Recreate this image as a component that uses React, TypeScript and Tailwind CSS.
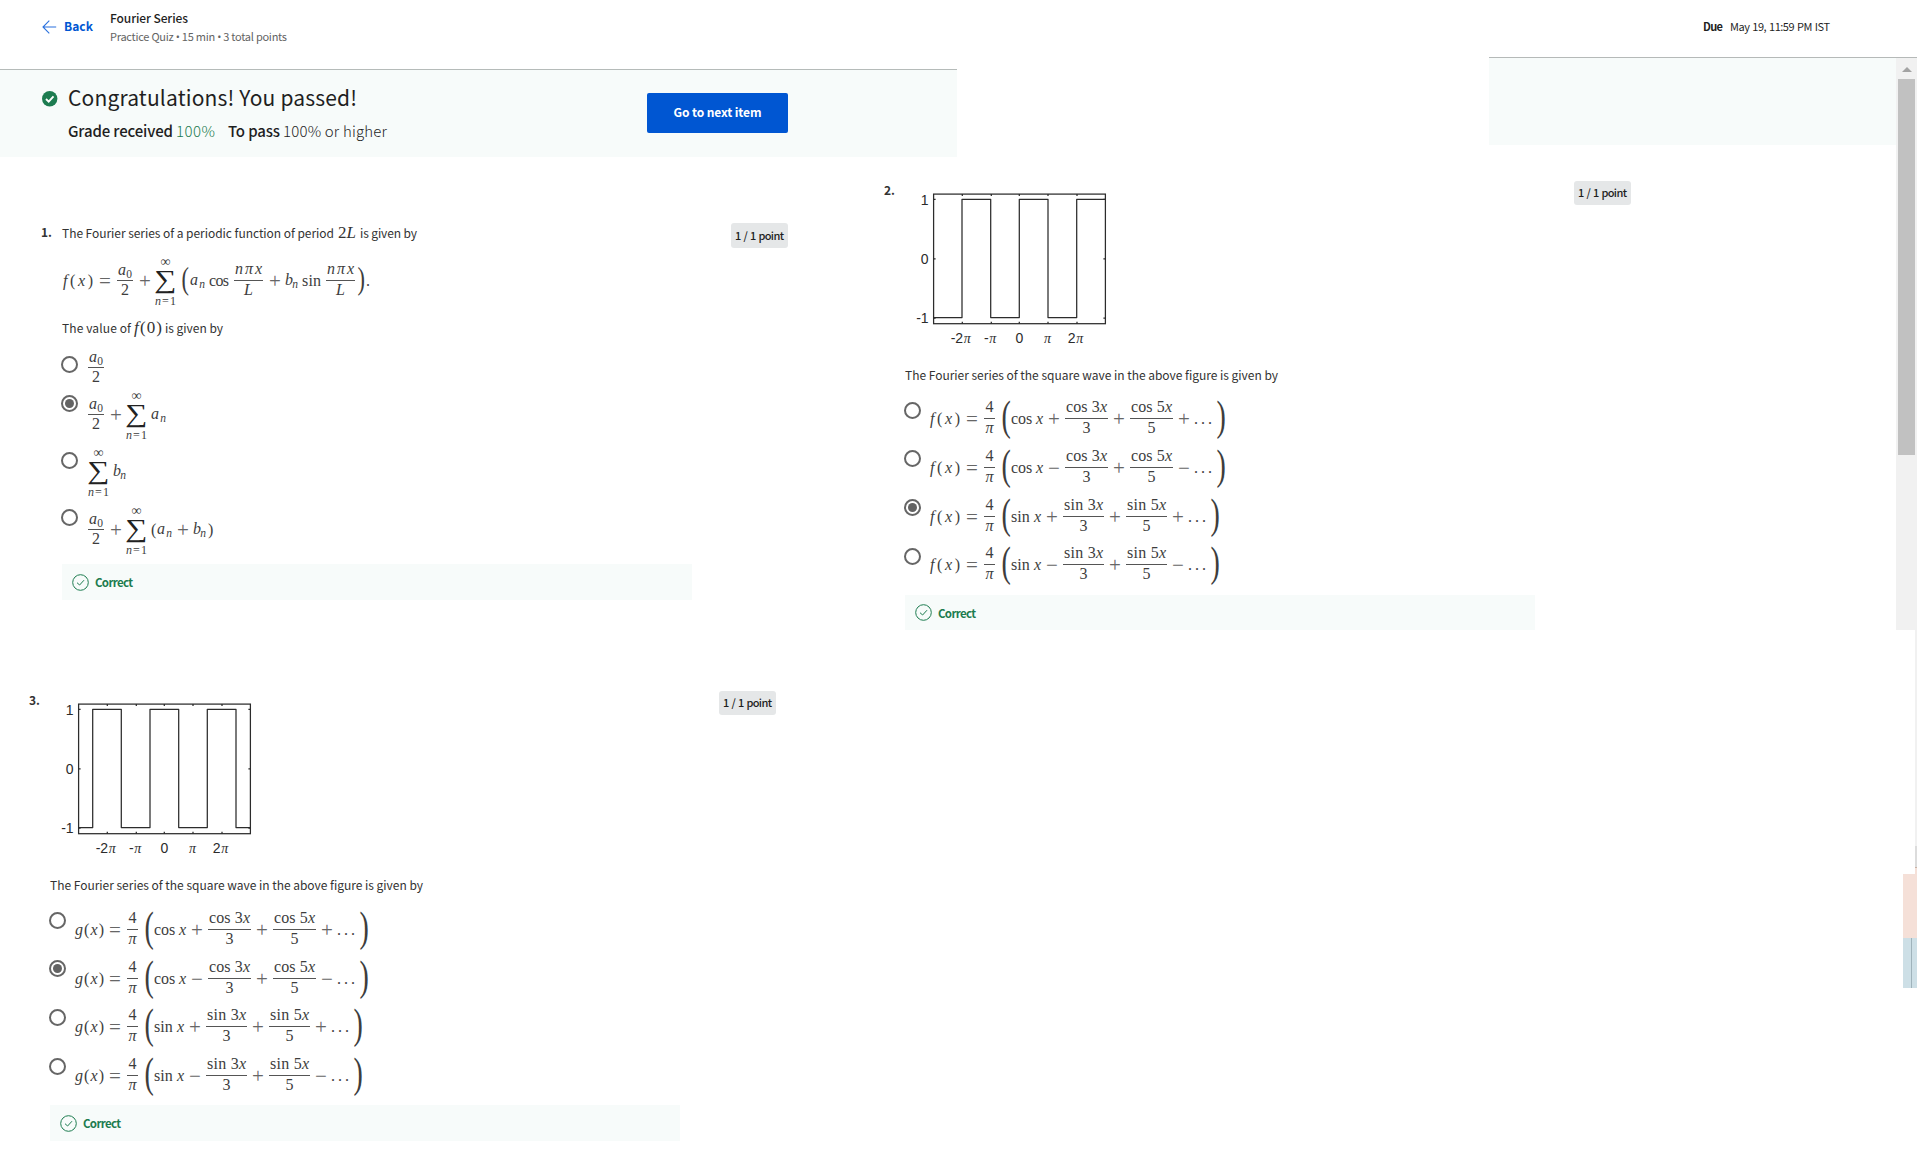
import { useLayoutEffect, useRef, useState } from "react";
import type { ReactNode } from "react";

/** Text whose tracking is computed so that it spans the width given by its classes. */
function Fit({ className = "", children }: { className?: string; children: ReactNode }) {
  const outer = useRef<HTMLSpanElement>(null);
  const inner = useRef<HTMLSpanElement>(null);
  const [spacing, setSpacing] = useState(0);
  useLayoutEffect(() => {
    if (!outer.current || !inner.current) return;
    const count = (inner.current.textContent ?? "").length - 1;
    if (count < 1) return;
    const room = outer.current.clientWidth - inner.current.getBoundingClientRect().width;
    setSpacing(room / count);
  }, []);
  return (
    <span ref={outer} className={`flex shrink-0 items-start whitespace-nowrap ${className}`}>
      <span ref={inner} className="block shrink-0" style={{ letterSpacing: `${spacing}px` }}>
        {children}
      </span>
    </span>
  );
}

const Sub = ({ children }: { children: ReactNode }) => (
  <span className="relative top-[3px] text-[11.5px]">{children}</span>
);
const I = ({ children }: { children: ReactNode }) => <i>{children}</i>;

function Formula({ className = "", children }: { className?: string; children: ReactNode }) {
  return (
    <div
      className={`flex shrink-0 items-center font-['Liberation_Serif',serif] text-[16px] leading-[16px] text-[#3d3d3d] ${className}`}
    >
      {children}
    </div>
  );
}

function Frac({ className, num, den }: { className: string; num: ReactNode; den: ReactNode }) {
  return (
    <span className={`flex shrink-0 flex-col items-stretch ${className}`}>
      <span className="flex h-5 justify-center pt-px">{num}</span>
      <span className="h-px bg-[#555]" />
      <span className="flex h-5 justify-center pt-px">{den}</span>
    </span>
  );
}

function Sum({ className }: { className: string }) {
  return (
    <span className={`flex w-[21px] shrink-0 flex-col items-center ${className}`}>
      <span className="flex h-3.5 items-center pt-[3px] text-[14px] leading-[14px]">∞</span>
      <span className="flex h-[26px] items-center justify-center text-[26px] leading-[26px] text-[#222]">
        <span className="scale-x-120">∑</span>
      </span>
      <Fit className="h-[15px] w-[21px] text-[12px] leading-[17px]">
        <I>n</I>=1
      </Fit>
    </span>
  );
}

const Big = ({ className, children }: { className: string; children: ReactNode }) => (
  <span
    className={`flex w-2 shrink-0 items-center justify-center text-[43px] leading-[42px] ${className}`}
  >
    <span className="-translate-y-[3px] scale-x-65">{children}</span>
  </span>
);
const Mid = ({ className, children }: { className: string; children: ReactNode }) => (
  <span
    className={`flex w-[7px] shrink-0 items-center justify-center text-[32px] leading-[31px] ${className}`}
  >
    <span className="-translate-y-[2px] scale-x-70">{children}</span>
  </span>
);
const Op = ({ className, children }: { className: string; children: ReactNode }) => (
  <span className={`flex w-[12px] shrink-0 justify-center text-[21px] text-[#666] ${className}`}>
    {children}
  </span>
);

function Series({ fn, trig, sign }: { fn: string; trig: "cos" | "sin"; sign: string }) {
  const cos = trig === "cos";
  return (
    <Formula className="h-[49px]">
      <Fit className={fn === "f" ? "w-[30px]" : "w-[29px]"}>
        <I>{fn}</I>(<I>x</I>)
      </Fit>
      <Op className={fn === "f" ? "ml-[6px]" : "ml-[5px]"}>=</Op>
      <Frac className="ml-[6px] w-[11px]" num="4" den={<I>π</I>} />
      <Big className="ml-[7px]">(</Big>
      <Fit className={cos ? "ml-[1px] w-[32px]" : "ml-[1px] w-[30px]"}>
        {trig} <I>x</I>
      </Fit>
      <Op className="ml-[5px]">{sign}</Op>
      <Frac
        className={cos ? "ml-[5px] w-[43px]" : "ml-[5px] w-[41px]"}
        num={
          <Fit className={cos ? "w-[41px]" : "w-[39px]"}>
            {trig} 3<I>x</I>
          </Fit>
        }
        den="3"
      />
      <Op className="ml-[5px]">+</Op>
      <Frac
        className={cos ? "ml-[5px] w-[43px]" : "ml-[5px] w-[41px]"}
        num={
          <Fit className={cos ? "w-[41px]" : "w-[39px]"}>
            {trig} 5<I>x</I>
          </Fit>
        }
        den="5"
      />
      <Op className="ml-[5px]">{sign}</Op>
      <Fit className="ml-[4px] w-[18px]">...</Fit>
      <Big className="ml-[5px]">)</Big>
    </Formula>
  );
}

function Radio({ checked, className }: { checked?: boolean; className: string }) {
  return (
    <span
      className={`flex size-[17px] shrink-0 items-center justify-center rounded-full border-2 border-[#666] ${className}`}
    >
      {checked && <span className="size-[9px] rounded-full bg-[#636363]" />}
    </span>
  );
}

function Badge({ className }: { className: string }) {
  return (
    <div className={`flex w-[57px] shrink-0 rounded-[3px] bg-[#e5e7e8] pl-[4px] ${className}`}>
      <Fit className="w-[49px] text-[11px] font-medium text-[#1f1f1f] [word-spacing:1px]">1 / 1 point</Fit>
    </div>
  );
}

function Correct({ className }: { className: string }) {
  return (
    <div className={`flex w-[630px] items-center bg-[#f7fbfa] pl-[10px] ${className}`}>
      <svg viewBox="0 0 17 17" className="size-[17px]" fill="none" stroke="#1d7c50">
        <circle cx="8.5" cy="8.5" r="7.8" />
        <path d="M5 8.7 7.6 11 12 6.2" />
      </svg>
      <Fit className="ml-[6px] w-[38px] text-[11.5px] leading-4 font-bold text-[#1d7c50]">Correct</Fit>
    </div>
  );
}

function Plot({ wave, className }: { wave: string; className: string }) {
  const ticks = [51.3, 80.3, 108.3, 137, 166];
  const pi = (
    <tspan className="font-['Liberation_Serif',serif] text-[14px] italic" dx="0.6">
      π
    </tspan>
  );
  return (
    <svg viewBox="0 0 196 170" className={`h-[170px] w-[196px] shrink-0 ${className}`}>
      <g fill="none" stroke="#2c2c2c" strokeWidth="1.25">
        <rect x="22.6" y="13.1" width="171.8" height="129.6" />
        <path d={wave} strokeLinejoin="round" />
        {ticks.map((x) => (
          <path key={x} d={`M${x} 13v2M${x} 142.7v-2`} />
        ))}
        <path d="M22.6 18.4h2M22.6 77.8h2M22.6 137h2M194.4 18.4h-2M194.4 77.8h-2M194.4 137h-2" />
      </g>
      <g className="fill-[#2b2b2b] font-['Liberation_Sans',sans-serif] text-[14px]">
        <text x="17.6" y="24" textAnchor="end">1</text>
        <text x="17.6" y="83.4" textAnchor="end">0</text>
        <text x="17.6" y="142.3" textAnchor="end">-1</text>
        <text x="39.7" y="162">-2{pi}</text>
        <text x="73" y="162">-{pi}</text>
        <text x="104.5" y="162">0</text>
        <text x="132.4" y="162">{pi}</text>
        <text x="156.8" y="162">2{pi}</text>
      </g>
    </svg>
  );
}

const waveF =
  "M22.6 136.5H51V18.3H79.7V136.5H108.3V18.3H137V136.5H165.7V18.3H194.4";
const waveG =
  "M22.6 136.5H36.7V18.3H65.3V136.5H94V18.3H122.7V136.5H151.3V18.3H180V136.5H194.4";

const seriesRows = [
  { trig: "cos", sign: "+" },
  { trig: "cos", sign: "−" },
  { trig: "sin", sign: "+" },
  { trig: "sin", sign: "−" },
] as const;

function Options({ fn, picked, rows, radios, gap }: {
  fn: string; picked: number; rows: string[]; radios: string[]; gap: string;
}) {
  return (
    <>
      {seriesRows.map((row, i) => (
        <div key={i} className={`flex items-start ${rows[i]}`}>
          <Radio checked={i === picked} className={radios[i]} />
          <div className={gap}>
            <Series fn={fn} trig={row.trig} sign={row.sign} />
          </div>
        </div>
      ))}
    </>
  );
}

function Ordinal({ children, className }: { children: ReactNode; className: string }) {
  return (
    <Fit className={`w-[11px] text-[12px] leading-4 font-bold text-[#333] ${className}`}>{children}</Fit>
  );
}

const prompt = "The Fourier series of the square wave in the above figure is given by";
const an = <><I>a</I><Sub><I>n</I></Sub></>;
const bn = <><I>b</I><Sub><I>n</I></Sub></>;
const a0 = <><I>a</I><Sub>0</Sub></>;
const npx = <I>nπx</I>;
const dot = <span className="font-['Open_Sans',sans-serif]">•</span>;

function A0Half({ className = "" }: { className?: string }) {
  return (
    <Frac className={`w-[16px] ${className}`} num={<Fit className="w-[14px] pt-px">{a0}</Fit>} den="2" />
  );
}

function QuestionOne() {
  return (
    <section className="w-[884px] shrink-0 pt-[66px]">
      <div className="flex h-[25px] items-start pl-[41px]">
        <Ordinal className="mt-[1px]">1.</Ordinal>
        <div className="mt-[2px] ml-[10px] flex w-[669px] text-[12px] leading-4 text-[#333]">
          <Fit className="w-[272px]">The Fourier series of a periodic function of period</Fit>
          <Fit className="ml-[4px] w-[18px] font-['Liberation_Serif',serif] text-[17px]">2<I>L</I></Fit>
          <Fit className="ml-[4px] w-[57px]">is given by</Fit>
        </div>
        <Badge className="h-[25px] leading-[24px]" />
      </div>
      <Formula className="mt-[5px] h-[55px] pl-[63px]">
        <Fit className="w-[30px]"><I>f</I>(<I>x</I>)</Fit>
        <Op className="ml-[6px]">=</Op>
        <A0Half className="ml-[6px]" />
        <Op className="ml-[6px]">+</Op>
        <Sum className="ml-[4px]" />
        <Mid className="ml-[6px]">(</Mid>
        <Fit className="ml-[1px] w-[15px]">{an}</Fit>
        <Fit className="ml-[4px] w-[20px]">cos</Fit>
        <Frac className="ml-[5px] w-[29px]" num={<Fit className="w-[27px]">{npx}</Fit>} den={<I>L</I>} />
        <Op className="ml-[6px]">+</Op>
        <Fit className="ml-[4px] w-[13px]">{bn}</Fit>
        <Fit className="ml-[4px] w-[19px]">sin</Fit>
        <Frac className="ml-[5px] w-[29px]" num={<Fit className="w-[27px]">{npx}</Fit>} den={<I>L</I>} />
        <Mid className="ml-[3px]">)</Mid>
        <span className="ml-[1px]">.</span>
      </Formula>
      <div className="mt-[12px] flex h-4 pl-[62px] text-[12px] leading-4 text-[#333]">
        <Fit className="w-[69px]">The value of</Fit>
        <Fit className="ml-[3px] w-[28px] font-['Liberation_Serif',serif] text-[17px]"><I>f</I>(0)</Fit>
        <Fit className="ml-[3px] w-[58px]">is given by</Fit>
      </div>
      <div className="mt-[11px] pl-[61px]">
        <div className="flex h-[40px] items-start">
          <Radio className="mt-[9px]" />
          <Formula className="h-[41px] pl-[10px]"><A0Half /></Formula>
        </div>
        <div className="flex h-[57px] items-start">
          <Radio checked className="mt-[8px]" />
          <Formula className="h-[55px] pl-[10px]">
            <A0Half />
            <Op className="ml-[6px]">+</Op>
            <Sum className="ml-[4px]" />
            <Fit className="ml-[4px] w-[15px]">{an}</Fit>
          </Formula>
        </div>
        <div className="flex h-[58px] items-start">
          <Radio className="mt-[8px]" />
          <Formula className="h-[55px] pl-[10px]">
            <Sum className="" />
            <Fit className="ml-[4px] w-[13px]">{bn}</Fit>
          </Formula>
        </div>
        <div className="flex h-[55px] items-start">
          <Radio className="mt-[7px]" />
          <Formula className="h-[55px] pl-[10px]">
            <A0Half />
            <Op className="ml-[6px]">+</Op>
            <Sum className="ml-[4px]" />
            <span className="ml-[4px] w-[6px]">(</span>
            <Fit className="w-[15px]">{an}</Fit>
            <Op className="ml-[5px]">+</Op>
            <Fit className="ml-[4px] w-[13px]">{bn}</Fit>
            <span className="ml-[2px]">)</span>
          </Formula>
        </div>
      </div>
      <Correct className="mt-[7px] ml-[62px] h-[36px]" />
    </section>
  );
}

export default function App() {
  return (
    <div className="flex h-[1168px] w-[1920px] overflow-hidden bg-white font-['Noto_Sans_CJK_SC',sans-serif]">
      <div className="w-[1896px] shrink-0">
        <div className="flex h-[157px]">
          <div className="w-[957px]">
            <header className="flex h-[70px] border-b border-[#b5bbb9] pl-[42px]">
              <svg viewBox="0 0 15 14" className="mt-[20px] h-[14px] w-[15px]" fill="none" stroke="#2a71de" strokeWidth="1.1">
                <path d="M14.2 7H1M7.3.6 1 7l6.3 6.4" />
              </svg>
              <Fit className="mt-[18px] ml-[7px] w-[29px] text-[12px] leading-4 font-bold text-[#0056d2]">Back</Fit>
              <div className="ml-[17px] pt-[10px]">
                <Fit className="h-4 w-[78px] text-[12px] leading-4 font-medium text-[#1f1f1f]">Fourier Series</Fit>
                <div className="mt-[2px] h-[16px]">
                  <Fit className="w-[177px] text-[11px] leading-4 text-[#636363]">
                    Practice Quiz {dot} 15 min {dot} 3 total points
                  </Fit>
                </div>
              </div>
            </header>
            <div className="flex h-[87px] bg-[#f7fbfa] pl-[42px]">
              <svg viewBox="0 0 16 16" className="mt-[21px] size-[16px]">
                <circle cx="7.7" cy="7.8" r="7.7" fill="#1d7c50" />
                <path d="M4 8 6.7 10.6 11.5 5.4" fill="none" stroke="#fff" strokeWidth="1.9" />
              </svg>
              <div className="ml-[10px] w-[579px] pt-[12px]">
                <Fit className="h-[30px] w-[289px] text-[21px] leading-[30px] text-[#1f1f1f]">
                  Congratulations! You passed!
                </Fit>
                <div className="mt-[8px] flex text-[15px] leading-[22px] text-[#1f1f1f]">
                  <Fit className="w-[105px] font-medium">Grade received</Fit>
                  <Fit className="ml-[3px] w-[39px] font-light text-[#1d7c50]">100%</Fit>
                  <Fit className="ml-[13px] w-[52px] font-medium">To pass</Fit>
                  <Fit className="ml-[3px] w-[104px] font-light">100% or higher</Fit>
                </div>
              </div>
              <button className="mt-[23px] flex h-[40px] w-[141px] items-center justify-center rounded-[2px] bg-[#0056d2] text-white">
                <Fit className="h-4 w-[88px] text-left text-[12px] leading-[14px] font-bold">Go to next item</Fit>
              </button>
            </div>
          </div>
          <div className="ml-[532px] w-[407px]">
            <header className="flex h-[58px] border-b border-[#b5b9b8] pt-[18px] pl-[214px] text-[11px] leading-4 text-[#1f1f1f]">
              <Fit className="w-[20px] text-[11px] font-bold">Due</Fit>
              <Fit className="ml-[7px] w-[100px] [word-spacing:1px]">May 19, 11:59 PM IST</Fit>
            </header>
            <div className="h-[87px] bg-[#f7fbfa]" />
          </div>
        </div>

        <div className="flex h-[534px]">
          <QuestionOne />
          <section className="w-[1012px] pt-[24px]">
            <div className="flex h-[186px] items-start">
              <Ordinal className="mt-px">2.</Ordinal>
              <Plot wave={waveF} className="ml-[16px]" />
              <Badge className="ml-[467px] h-[24px] leading-[23px]" />
            </div>
            <Fit className="ml-[21px] h-4 w-[373px] text-[12px] leading-4 text-[#333]">{prompt}</Fit>
            <div className="mt-[11px] pl-[20px]">
              <Options
                fn="f"
                picked={2}
                rows={["h-[49px]", "h-[49px]", "h-[48px]", "h-[49px]"]}
                radios={["mt-[8px]", "mt-[7px]", "mt-[7px]", "mt-[8px]"]}
                gap="ml-[9px]"
              />
            </div>
            <Correct className="mt-[6px] ml-[21px] h-[35px]" />
          </section>
        </div>

        <section className="pl-[29px]">
          <div className="flex h-[186px] items-start">
            <Ordinal className="mt-px">3.</Ordinal>
            <Plot wave={waveG} className="ml-[16px]" />
            <Badge className="ml-[467px] h-[24px] leading-[23px]" />
          </div>
          <Fit className="ml-[21px] h-4 w-[373px] text-[12px] leading-4 text-[#333]">{prompt}</Fit>
          <div className="mt-[12px] pl-[20px]">
            <Options
              fn="g"
              picked={1}
              rows={["h-[49px]", "h-[48px]", "h-[49px]", "h-[49px]"]}
              radios={["mt-[7px]", "mt-[6px]", "mt-[7px]", "mt-[7px]"]}
              gap="ml-[9px]"
            />
          </div>
          <Correct className="mt-[5px] ml-[21px] h-[36px]" />
        </section>
      </div>

      <aside className="flex w-[21px] shrink-0 flex-col items-end pt-[57px]">
        <div className="h-px w-[21px] bg-[#b5b9b8]" />
        <div className="flex h-[572px] w-[21px] flex-col items-center bg-[#f1f1f1]">
          <svg viewBox="0 0 10 5" className="mt-[9px] h-[5px] w-[10px]">
            <path d="M5 0 10 5H0z" fill="#a3a3a3" />
          </svg>
          <div className="mt-[7px] h-[376px] w-[17px] bg-[#c1c1c1]" />
        </div>
        <div className="h-[216px] w-[2px] bg-[#f1f1f1]" />
        <div className="h-[21px] w-[2px] bg-[#dcdcdc]" />
        <div className="h-px w-[2px] bg-[#c9b3a6]" />
        <div className="h-[6px] w-[2px] bg-[#f5e0d8]" />
        <div className="h-[64px] w-[14px] bg-[#f5e0d8]" />
        <div className="flex h-[50px] w-[14px] bg-[#cddfe6] pl-[8px]">
          <div className="w-px bg-[#9fb3bb]" />
        </div>
      </aside>
    </div>
  );
}
